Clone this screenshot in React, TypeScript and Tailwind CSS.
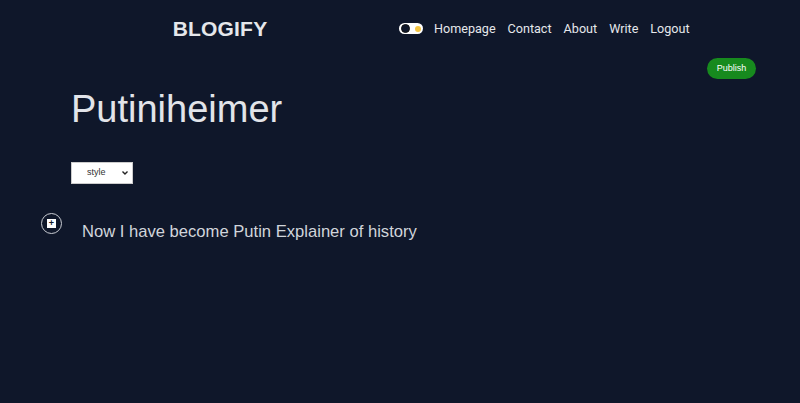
import { useState } from "react";

const links = ["Homepage", "Contact", "About", "Write", "Logout"];

export default function App() {
  const [dark, setDark] = useState(true);

  return (
    <div className="min-h-[403px] w-full bg-[#0f172a] font-['Liberation_Sans',Arial,sans-serif]">
      {/* Navbar */}
      <nav className="flex h-[57px] items-center">
        <div className="flex w-[440px] justify-center">
          <span className="text-[21px] font-bold tracking-[0.2px] text-[#e5e7eb]">BLOGIFY</span>
        </div>
        <div className="ml-[-41px] mt-[1px] flex items-center gap-3 font-['Roboto',sans-serif] text-[12.6px] text-[#e5e7eb]">
          <button
            onClick={() => setDark(!dark)}
            className="mr-[-1px] flex h-[11px] w-[24px] items-center justify-between rounded-full bg-white px-[2px]"
          >
            <span className="h-[9px] w-[9px] rounded-full border-[1.5px] border-[#111] bg-[#0f172a]" />
            <span className="h-[6px] w-[6px] rounded-full bg-[#f5c542]" />
          </button>
          {links.map((l) => (
            <a key={l} className="cursor-pointer">
              {l}
            </a>
          ))}
        </div>
      </nav>

      {/* Publish */}
      <div className="flex justify-end pr-[44px]">
        <button className="mt-[1px] h-[21px] w-[49px] rounded-full bg-[#178a1e] text-[9px] text-white">Publish</button>
      </div>

      {/* Editor */}
      <div className="pl-[71px]">
        <h1 className="mt-[6px] text-[38px] leading-[48px] text-[#e2e4e9]">Putiniheimer</h1>
        <div className="relative mt-[29px] w-[62px]">
          <select className="block h-[22px] w-[62px] appearance-none border border-[#ccc] bg-white pl-[15px] text-[9px] text-[#333]">
            <option>style</option>
          </select>
          <svg
            className="pointer-events-none absolute right-[5px] top-[9px]"
            width="6"
            height="4"
            viewBox="0 0 6 4"
            fill="none"
            stroke="#222"
            strokeWidth="1.4"
          >
            <path d="M0.5 0.5 L3 3 L5.5 0.5" />
          </svg>
        </div>
      </div>

      <div className="mt-[18px] flex items-center pl-[41px]">
        <div className="flex h-[21px] w-[21px] items-center justify-center rounded-full border border-[#c9ccd3]">
          <span className="flex h-[9px] w-[9px] items-center justify-center bg-white text-[9px] font-bold leading-none text-[#0f172a]">
            +
          </span>
        </div>
        <p className="ml-[20px] mt-[18px] text-[16.6px] text-[#d1d5db]">Now I have become Putin Explainer of history</p>
      </div>
    </div>
  );
}
